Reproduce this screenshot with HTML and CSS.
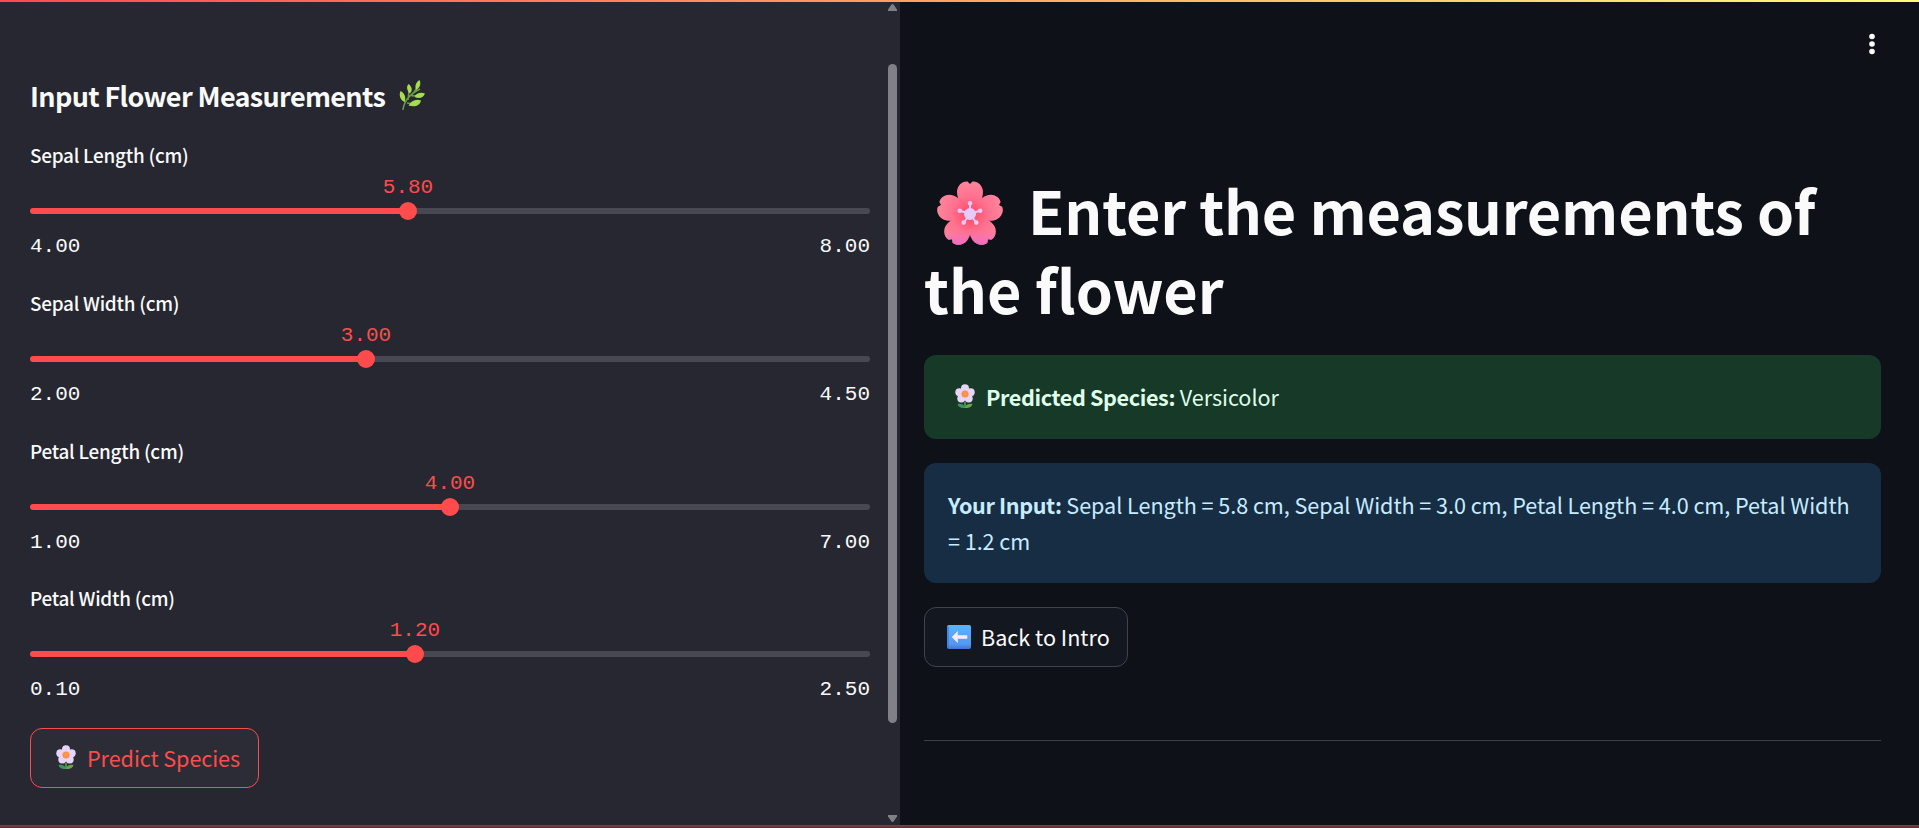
FILE: index.html
```html
<!DOCTYPE html>
<html lang="en">
<head>
<meta charset="utf-8">
<title>Iris Flower Prediction</title>
<link rel="stylesheet" href="styles.css">
</head>
<body>
<svg class="defs" width="0" height="0" aria-hidden="true">
  <defs>
    <radialGradient id="core"><stop offset="0" stop-color="#ff9b54"/><stop offset="1" stop-color="#fb8b3c"/></radialGradient>
    <symbol id="blossom" viewBox="0 0 20 24">
      <path d="M10 18v6" stroke="#4c9a3d" stroke-width="1.8"/>
      <path d="M10 24C5.500 24.300 3 23 2.500 20c3.200-.6 6.100.2 7.500 3.200z" fill="#3f9263"/>
      <path d="M10 24c4.500.3 7-1 7.500-4-3.200-.6-6.100.2-7.500 3.200z" fill="#6ba04d"/>
      <g fill="#e6d5f6"><circle cx="10" cy="4.300" r="4"/><circle cx="4.300" cy="8.300" r="4"/><circle cx="15.700" cy="8.300" r="4"/><circle cx="6.300" cy="14.600" r="4"/><circle cx="13.700" cy="14.600" r="4"/><circle cx="10" cy="10" r="6"/></g>
      <circle cx="10" cy="10" r="3.500" fill="url(#core)"/>
    </symbol>
  </defs>
</svg>
<div class="topbar"></div>
<div class="app">
  <aside class="sidebar">
    <div class="panel">
      <h2 class="title"><span>Input Flower Measurements</span>
        <svg class="herb" viewBox="0 0 26 31"><path d="M4 30C5 21 11 14 21 9M9 20 10 11M6 22 3 15M12 16 18 8M8 23 15 24M13 16 22 15" fill="none" stroke="#6b9b45" stroke-width="1.500"/><g fill="#a4df4a"><path d="M20.500 0c2 4 .3 8-3.500 10-1.500-4 0-8 3.500-10zM9.500 4c4 3 4 7 1.500 9.500C8 11 7 7 9.500 4zM1.500 11c4 2 6 6 4 11-4-2-6-6-4-11zM26 13.500c-2 5-6 5.500-10.500 3.500 2-4 6-5 10.500-3.500zM22 20.500c-1 5-6 7-12.500 5 3-5 7.500-7 12.500-5z"/></g></svg>
      </h2>
      <div class="slider"><label class="name">Sepal Length (cm)</label>
        <div class="track" style="--v:45%"><span class="value">5.80</span><span class="thumb"></span></div>
        <div class="range"><span>4.00</span><span>8.00</span></div></div>
      <div class="slider"><label class="name">Sepal Width (cm)</label>
        <div class="track" style="--v:40%"><span class="value">3.00</span><span class="thumb"></span></div>
        <div class="range"><span>2.00</span><span>4.50</span></div></div>
      <div class="slider"><label class="name">Petal Length (cm)</label>
        <div class="track" style="--v:50%"><span class="value">4.00</span><span class="thumb"></span></div>
        <div class="range"><span>1.00</span><span>7.00</span></div></div>
      <div class="slider"><label class="name">Petal Width (cm)</label>
        <div class="track" style="--v:45.83%"><span class="value">1.20</span><span class="thumb"></span></div>
        <div class="range"><span>0.10</span><span>2.50</span></div></div>
      <button class="btn predict"><svg class="blossom"><use href="#blossom"/></svg><span>Predict Species</span></button>
    </div>
    <div class="scroll">
      <svg width="9" height="7" viewBox="0 0 9 7"><path d="M3.500.5Q4.500-.5 5.500.5L9 5.500V7H0V5.500z" fill="#808086"/></svg>
      <div class="bar"></div>
      <svg width="9" height="7" viewBox="0 0 9 7"><path d="M3.500 6.500Q4.500 7.500 5.500 6.500L9 1.500V0H0v1.500z" fill="#808086"/></svg>
    </div>
  </aside>
  <main class="main">
    <header class="header"><svg width="6" height="22" viewBox="0 0 6 22" fill="#fafafa"><circle cx="3" cy="3.500" r="2.800"/><circle cx="3" cy="11" r="2.800"/><circle cx="3" cy="18.500" r="2.800"/></svg></header>
    <h1 class="heading">
      <svg class="sakura" viewBox="0 0 66 64">
        <defs><radialGradient id="pink" gradientUnits="userSpaceOnUse" cx="33" cy="33" r="32"><stop offset="0" stop-color="#fc4561"/><stop offset=".55" stop-color="#ff718f"/><stop offset="1" stop-color="#ff839b"/></radialGradient>
        <linearGradient id="violet" gradientUnits="userSpaceOnUse" x1="0" y1="50" x2="0" y2="64"><stop offset="0" stop-color="#f16ac4" stop-opacity="0"/><stop offset="1" stop-color="#f16ac4"/></linearGradient>
        <path id="pt" d="M33 34C27 29 20 20 20 11 20 5 25 0 30.500.5L33 3 35.500.5C41 0 46 5 46 11 46 20 39 29 33 34z"/>
        <clipPath id="low"><use href="#pt" transform="rotate(144 33 33.500)"/><use href="#pt" transform="rotate(216 33 33.500)"/></clipPath></defs>
        <g fill="url(#pink)"><use href="#pt"/><use href="#pt" transform="rotate(72 33 33.500)"/><use href="#pt" transform="rotate(144 33 33.500)"/><use href="#pt" transform="rotate(216 33 33.500)"/><use href="#pt" transform="rotate(288 33 33.500)"/></g>
        <rect y="50" width="66" height="14" fill="url(#violet)" clip-path="url(#low)"/>
        <g stroke="#e7c9fa" stroke-width="2" fill="#e7c9fa"><path d="M33 33V22M33 33 22.500 29.500M33 33 43.500 29.500M33 33 26.500 42M33 33 39.500 42"/><circle cx="33" cy="33" r="5"/><circle cx="33" cy="22.300" r="1.300"/><circle cx="22.800" cy="29.700" r="1.300"/><circle cx="43.200" cy="29.700" r="1.300"/><circle cx="26.700" cy="41.600" r="1.300"/><circle cx="39.300" cy="41.600" r="1.300"/></g>
      </svg><span class="h-a">Enter the measurements of</span> <span class="h-b">the flower</span></h1>
    <div class="alert success"><svg class="blossom"><use href="#blossom"/></svg><p><strong>Predicted Species:</strong> Versicolor</p></div>
    <div class="alert info"><p><strong>Your Input:</strong> Sepal Length = 5.8 cm, Sepal Width = 3.0 cm, Petal Length = 4.0 cm, Petal Width<br>= 1.2 cm</p></div>
    <button class="btn back"><svg class="arrow" viewBox="0 0 24 24"><defs><linearGradient id="blue" x1="0" y1="0" x2="0" y2="1"><stop offset="0" stop-color="#5ab4ff"/><stop offset=".8" stop-color="#5598f0"/><stop offset="1" stop-color="#4674d2"/></linearGradient></defs><rect width="24" height="24" rx="2" fill="url(#blue)"/><path d="M1 2v20" stroke="#437bdc" stroke-width="1.500"/><path d="M5 12 10.500 6.500v4H20v3h-9.500v4z" fill="#f3eafd" stroke="#f3eafd" stroke-width=".6" stroke-linejoin="round"/></svg><span>Back to Intro</span></button>
    <hr class="rule">
  </main>
</div>
<div class="bottombar"></div>
</body>
</html>
```

FILE: styles.css
```css
* { box-sizing: border-box; }
body { margin: 0; height: 828px; overflow: hidden; display: flex; flex-direction: column; background: #0e1117; color: #fafafa; font-family: "Noto Sans CJK SC", "Noto Sans", sans-serif; font-size: 21.6px; }
h1, h2, p { margin: 0; }
.defs { position: absolute; }
.topbar { height: 2px; background: linear-gradient(90deg, #ff4b4b, #fffd80); flex: none; }
.bottombar { height: 3px; background: linear-gradient(#70494c, #5f2b2e); flex: none; }
.app { height: 823px; display: flex; }
.sidebar { width: 900px; background: #262730; display: flex; justify-content: space-between; flex: none; }
.panel { width: 870px; padding: 76px 0 0 30px; }
.title { height: 36px; display: flex; align-items: center; gap: 14px; font-size: 27px; line-height: 36px; font-weight: 700; white-space: nowrap; }
.title span { letter-spacing: -0.65px; }
.herb { width: 26px; height: 31px; position: relative; top: -1px; }
.slider { height: 147.75px; padding-top: 23px; }
.name { display: block; height: 36px; line-height: 36px; font-size: 18.9px; letter-spacing: -0.25px; font-weight: 500; white-space: nowrap; }
.track { position: relative; height: 6px; margin-top: 35px; margin-bottom: 18px; border-radius: 3px; background: linear-gradient(90deg, #ff4b4b var(--v), #474852 var(--v)); }
.slider .name + .track { margin-top: 35px; }
.thumb { position: absolute; left: calc(var(--v) - 9px); top: -6px; width: 18px; height: 18px; border-radius: 50%; background: #ff4b4b; }
.value { position: absolute; left: var(--v); top: -35px; line-height: 30px; transform: translateX(-50%); color: #ff4b4b; }
.value, .range { font-family: "Liberation Mono", monospace; font-size: 21px; }
.range { display: flex; justify-content: space-between; line-height: 30px; height: 30px; }
.btn { display: flex; align-items: center; height: 60px; border: 1px solid #41434a; border-radius: 12px; background: #131720; color: #fafafa; font: inherit; font-size: 21.6px; white-space: nowrap; }
.btn span { line-height: 36px; }
.predict { width: 229px; margin-top: 23px; padding: 0 0 0 25px; gap: 11px; border-color: #ff4b4b; background: #2b2c36; color: #ff4b4b; letter-spacing: -0.07px; }
.blossom { width: 20px; height: 24px; flex: none; }
.predict .blossom { position: relative; top: -1px; }
.scroll { width: 15px; padding: 2px 3px 3px 3px; display: flex; flex-direction: column; }
.bar { width: 9px; height: 659px; margin: 53px 0 92px; border-radius: 5px; background: #808086; }
.main { flex: 1; padding: 0 38px 0 24px; }
.header { height: 168px; padding: 31px 6px 0 0; display: flex; justify-content: flex-end; }
.heading { height: 158px; font-size: 59.4px; line-height: 79px; font-weight: 700; white-space: nowrap; }
.sakura { width: 66px; height: 64px; margin: 0 25px 0 13px; vertical-align: -10px; }
.h-a { letter-spacing: -0.19px; }
.h-b { display: block; }
.alert { border-radius: 12px; padding: 24px; line-height: 36px; letter-spacing: -0.05px; white-space: nowrap; }
.alert strong { letter-spacing: -0.38px; }
.success { margin-top: 27px; height: 84px; background: #173928; color: #dffde9; display: flex; align-items: center; }
.success .blossom { position: relative; top: -1px; margin: 0 11px 0 7px; }
.info { margin-top: 24px; height: 120px; background: #172d43; color: #c7ebff; }
.back { margin-top: 24px; width: 204px; padding: 0 0 0 22px; gap: 10px; }
.arrow { width: 24px; height: 24px; }
.rule { border: 0; height: 1px; margin: 73px 0 0; background: #3e4046; }
```
